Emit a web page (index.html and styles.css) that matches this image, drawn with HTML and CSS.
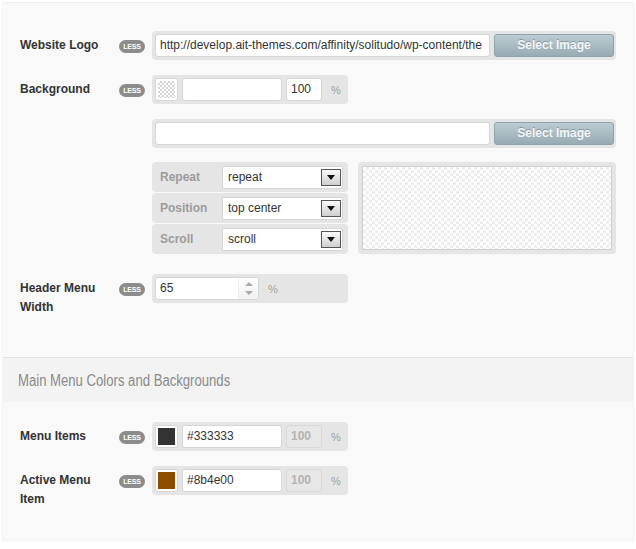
FILE: index.html
```html
<!DOCTYPE html>
<html>
<head>
<meta charset="utf-8">
<link rel="stylesheet" href="styles.css">
</head>
<body>
<div class="panel">
  <div class="section">
    <div class="row">
      <div class="label">Website Logo</div>
      <span class="badge">LESS</span>
      <div class="field">
        <div class="input url">http://develop.ait-themes.com/affinity/solitudo/wp-content/the</div>
        <div class="btn">Select Image</div>
      </div>
    </div>

    <div class="row gap-row">
      <div class="label">Background</div>
      <span class="badge">LESS</span>
      <div class="stack">
        <div class="field small">
          <div class="swatch"><span class="checker"></span></div>
          <div class="input color"></div>
          <div class="input opacity">100</div>
          <span class="pct">%</span>
        </div>
        <div class="field">
          <div class="input url"></div>
          <div class="btn">Select Image</div>
        </div>
        <div class="bg-options">
          <div class="opts">
            <div class="opt">
              <span class="opt-label">Repeat</span>
              <div class="select"><span>repeat</span><span class="arrow"></span></div>
            </div>
            <div class="opt">
              <span class="opt-label">Position</span>
              <div class="select"><span>top center</span><span class="arrow"></span></div>
            </div>
            <div class="opt">
              <span class="opt-label">Scroll</span>
              <div class="select"><span>scroll</span><span class="arrow"></span></div>
            </div>
          </div>
          <div class="preview"><div class="preview-inner"></div></div>
        </div>
      </div>
    </div>

    <div class="row menu-width">
      <div class="label">Header Menu Width</div>
      <span class="badge">LESS</span>
      <div class="field small">
        <div class="input number"><span>65</span><span class="spin"><span class="up"></span><span class="down"></span></span></div>
        <span class="pct">%</span>
      </div>
    </div>
  </div>

  <div class="section-head"><span class="head-text">Main Menu Colors and Backgrounds</span></div>

  <div class="section second">
    <div class="row">
      <div class="label">Menu Items</div>
      <span class="badge">LESS</span>
      <div class="field small">
        <div class="swatch"><span class="fill dark"></span></div>
        <div class="input color">#333333</div>
        <div class="input opacity disabled">100</div>
        <span class="pct">%</span>
      </div>
    </div>
    <div class="row gap-row-2">
      <div class="label">Active Menu Item</div>
      <span class="badge">LESS</span>
      <div class="field small">
        <div class="swatch"><span class="fill brown"></span></div>
        <div class="input color">#8b4e00</div>
        <div class="input opacity disabled">100</div>
        <span class="pct">%</span>
      </div>
    </div>
  </div>
</div>
</body>
</html>
```

FILE: styles.css
```css
* { box-sizing: border-box; }
html, body { margin: 0; padding: 0; background: #ffffff; }
body {
  font-family: "Liberation Sans", Arial, sans-serif;
  font-size: 12px;
  color: #333;
}
.panel {
  margin: 2px 2px 0 2px;
  background: #f9f9f9;
  border: 1px solid #f2f2f2;
  height: 539px;
}
.section { padding: 28px 0 40px 17px; }
.section.second { padding-top: 20px; padding-bottom: 40px; }
.row { display: flex; align-items: flex-start; }
.gap-row { margin-top: 15px; }
.gap-row-2 { margin-top: 15px; }
.menu-width { margin-top: 20px; }
.label {
  width: 90px;
  margin-right: 9px;
  padding-top: 5px;
  line-height: 19px;
  font-weight: bold;
  color: #333;
}
.badge {
  width: 26px;
  height: 13px;
  margin-top: 9px;
  margin-right: 7px;
  border-radius: 7px;
  background: #8c8c8c;
  color: #fff;
  font-size: 7px;
  font-weight: bold;
  line-height: 13px;
  text-align: center;
  letter-spacing: -0.2px;
  flex: none;
}
.stack { display: flex; flex-direction: column; gap: 15px; }
.field {
  display: flex;
  align-items: center;
  gap: 4px;
  width: 464px;
  height: 29px;
  padding: 3px;
  background: #e5e5e5;
  border-radius: 4px;
}
.field.small { width: 196px; }
.input {
  height: 23px;
  background: #fff;
  border: 1px solid #d6d6d6;
  border-radius: 3px;
  padding: 0 4px;
  line-height: 21px;
  color: #333;
  white-space: nowrap;
  overflow: hidden;
  flex: none;
}
.input.url { width: 335px; }
.input.color { width: 100px; }
.input.opacity { width: 36px; }
.input.disabled { background: #e7e7e7; border-color: #d8d8d8; color: #b3b3b3; font-weight: bold; }
.input.number {
  width: 104px;
  display: flex;
  justify-content: space-between;
  padding-right: 0;
}
.spin {
  width: 20px;
  display: flex;
  flex-direction: column;
  justify-content: center;
  align-items: center;
  gap: 5px;
  background: linear-gradient(#fff, #f1f1f1);
  border-left: 1px solid #eee;
}
.spin .up, .spin .down { width: 0; height: 0; border-left: 4px solid transparent; border-right: 4px solid transparent; }
.spin .up { border-bottom: 4px solid #a9a9a9; }
.spin .down { border-top: 4px solid #a9a9a9; }
.pct { margin-left: 5px; color: #a0a0a0; font-size: 11px; }
.btn {
  width: 120px;
  height: 23px;
  flex: none;
  border: 1px solid #8fa3ab;
  border-radius: 3px;
  background: linear-gradient(#bccbd1, #97abb3);
  color: #f4f7f8;
  font-weight: bold;
  text-align: center;
  line-height: 21px;
  text-shadow: 0 -1px 0 rgba(90,110,120,0.5);
}
.swatch {
  width: 23px;
  height: 23px;
  flex: none;
  background: #fff;
  border: 1px solid #d6d6d6;
  border-radius: 2px;
  padding: 2px;
}
.swatch span { display: block; width: 100%; height: 100%; }
.checker {
  background: conic-gradient(#d4d4d4 90deg, #fff 90deg 180deg, #d4d4d4 180deg 270deg, #fff 270deg) 0 0 / 4px 4px;
}
.fill.dark { background: #333333; }
.fill.brown { background: #8b4e00; }
.bg-options { display: flex; gap: 10px; margin-top: -1px; }
.opts { display: flex; flex-direction: column; gap: 1px; width: 196px; }
.opt {
  height: 30px;
  display: flex;
  align-items: center;
  padding: 0 5px 0 8px;
  background: #e5e5e5;
  border-radius: 4px;
}
.opt-label { width: 62px; font-weight: bold; color: #9b9b9b; }
.select {
  flex: 1;
  height: 23px;
  display: flex;
  align-items: center;
  justify-content: space-between;
  background: #fff;
  border: 1px solid #d6d6d6;
  border-radius: 2px;
  padding: 0 1px 0 5px;
}
.arrow {
  width: 20px;
  height: 17px;
  border: 1px solid #555;
  background: linear-gradient(#fafafa, #cfcfcf);
  position: relative;
}
.arrow::after {
  content: "";
  position: absolute;
  left: 5px;
  top: 5px;
  border-left: 4px solid transparent;
  border-right: 4px solid transparent;
  border-top: 5px solid #111;
}
.preview {
  width: 258px;
  height: 92px;
  background: #e5e5e5;
  border-radius: 4px;
  padding: 4px;
}
.preview-inner {
  width: 100%;
  height: 100%;
  border: 1px solid #d0d0d0;
  background: conic-gradient(#eeeeee 90deg, #fff 90deg 180deg, #eeeeee 180deg 270deg, #fff 270deg) 0 0 / 6px 6px;
}
.section-head {
  height: 45px;
  border-top: 1px solid #e3e3e3;
  background: #f3f3f3;
  padding-left: 15px;
  padding-top: 1px;
  font-size: 16px;
  line-height: 43px;
  color: #8a8a8a;
}
.head-text {
  display: inline-block;
  transform: scaleX(0.82);
  transform-origin: left center;
  white-space: nowrap;
}
```
